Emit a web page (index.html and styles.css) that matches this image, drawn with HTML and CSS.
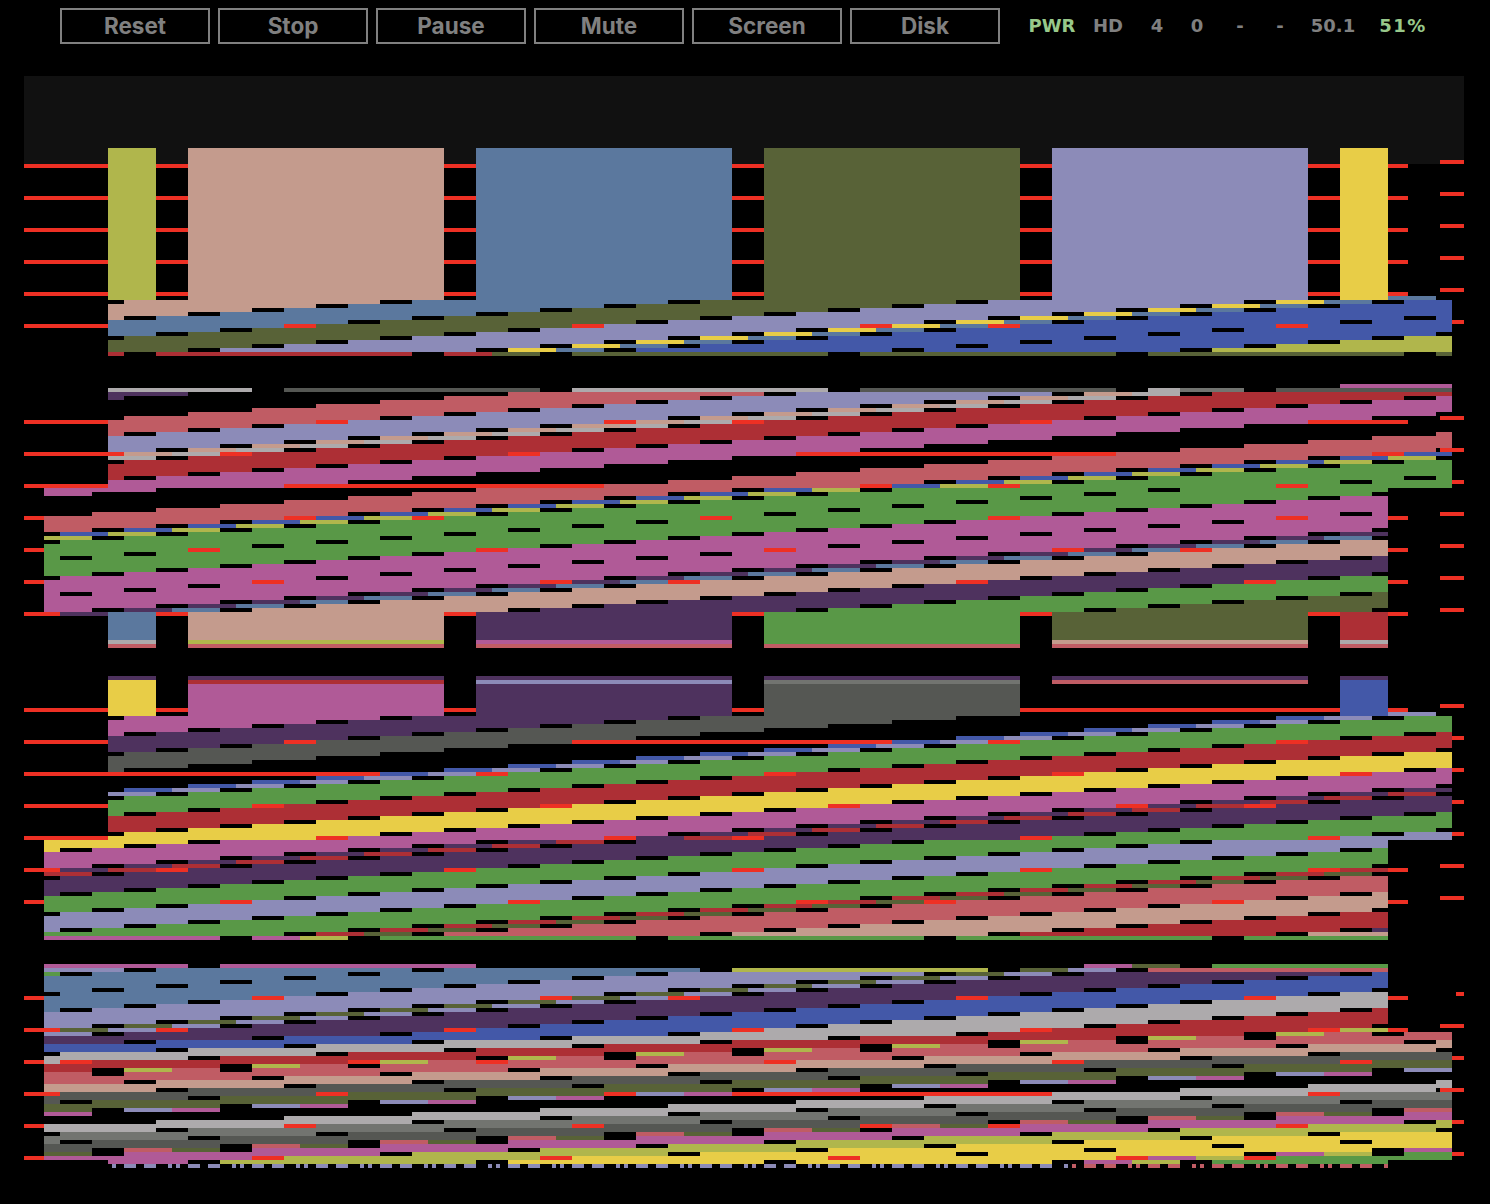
FILE: index.html
```html
<!DOCTYPE html>
<html lang="en">
<head>
<meta charset="utf-8">
<title>Emulator</title>
<link rel="stylesheet" href="styles.css">
</head>
<body>
<header class="toolbar">
  <nav class="buttons">
    <button class="btn">Reset</button>
    <button class="btn">Stop</button>
    <button class="btn">Pause</button>
    <button class="btn">Mute</button>
    <button class="btn">Screen</button>
    <button class="btn">Disk</button>
  </nav>
  <div class="status">
    <span class="stat on">PWR</span>
    <span class="stat">HD</span>
    <span class="stat">4</span>
    <span class="stat">0</span>
    <span class="stat">-</span>
    <span class="stat">-</span>
    <span class="stat">50.1</span>
    <span class="stat on pct">51%</span>
  </div>
</header>
<canvas class="screen" id="screen" width="1440" height="1128"></canvas>
<script src="app.js"></script>
</body>
</html>
```
FILE: styles.css
```css
html, body {
  margin: 0;
  padding: 0;
  background: #000;
  height: 1204px;
  overflow: hidden;
}
.toolbar {
  display: flex;
  align-items: flex-start;
  height: 68px;
  padding: 8px 0 0 60px;
}
.buttons {
  display: flex;
  gap: 8px;
}
.btn {
  width: 150px;
  height: 36px;
  box-sizing: border-box;
  border: 2px solid #808080;
  background: #000;
  color: #808080;
  font: 700 22.5px/32px Inter, "Liberation Sans", sans-serif;
  padding: 0;
  margin: 0;
}
.status {
  display: grid;
  grid-template-columns: 56px 56px 42px 38px 48px 32px 74px 66px;
  margin-left: 24px;
  height: 36px;
}
.stat {
  text-align: center;
  color: #808080;
  font: 700 18px/36px "DejaVu Sans", sans-serif;
}
.stat.on {
  color: #98c88a;
}
.stat.pct {
  letter-spacing: 1.5px;
}
.screen {
  display: block;
  margin-left: 24px;
  width: 1440px;
  height: 1128px;
  filter: blur(0.45px);
}
```
FILE: app.js
```js
(function () {
  var C = {
    yo: '#b0b64c', pink: '#c49b8d', steel: '#5b789e', olive: '#586237', lav: '#8c8bb8',
    yellow: '#e8cd47', bright: '#4358a8', red: '#ad2f35', mag: '#b05a97', rose: '#c05c64',
    green: '#599847', purple: '#4e325e', dg: '#555753', lg: '#adaaac', mg: '#727470'
  };
  var LINE = '#ee3024';
  var ROWS = [164, 196, 228, 260, 292, 324, 420, 452, 484, 516, 548, 580, 612, 708, 740, 772,
    804, 836, 868, 900, 996, 1028, 1060, 1092, 1124, 1156];
  var ctx = document.getElementById('screen').getContext('2d');
  ctx.translate(-24, -76);

  function bgAt(x, y) {
    if (x < 1408 && ROWS.indexOf(y) >= 0) return LINE;
    if (x >= 1440 && ROWS.indexOf(y + 4) >= 0 && !(y === 992 && x < 1456)) return LINE;
    return y < 164 ? '#111111' : '#000000';
  }
  function cell(x, y, c) { ctx.fillStyle = c; ctx.fillRect(x, y, 4, 4); }
  function rect(x0, x1, y0, y1, c) { ctx.fillStyle = c; ctx.fillRect(x0, y0, x1 - x0, y1 - y0); }

  ctx.fillStyle = '#000'; ctx.fillRect(24, 76, 1440, 1128);
  for (var bx = 24; bx < 1464; bx += 4) for (var by = 76; by < 1204; by += 4) {
    var col = bgAt(bx, by);
    if (col !== '#000000') cell(bx, by, col);
  }

  var ID = function (r) { return r; };
  var M2 = function (r) { return r < 488 ? r + 4 : r; };
  var M3 = function (r) { return r > 840 ? r - 4 : r; };
  var M4 = function (r) {
    if (r <= 1032) return r;
    if (r >= 1288) return 1164 + (r - 1288);
    return 1032 + Math.ceil((r - 1032) / 8) * 4;
  };

  function lvl(a, x) { return a.y - 4 * Math.floor((x - a.x) / 64); }

  // Each band: [x, y, colour, thinB?, noHole?] — the band runs from this line to the next one.
  function group(g) {
    var m = g.m || ID, L = g.lines, k, x, y;
    var mapOf = function (a) { return a[5] || m; };
    for (k = 0; k < L.length - 1; k++) {
      var a = { x: L[k][0], y: L[k][1] }, b = { x: L[k + 1][0], y: L[k + 1][1] };
      var ma = mapOf(L[k]), mb = mapOf(L[k + 1]);
      if (L[k][3]) {
        for (var i = -40; i < 60; i++) {
          var s = a.x + 64 * i, r = a.y - 4 * i;
          if (ma(r) === ma(r + 4)) continue;
          y = ma(r);
          for (x = s + 32; x < s + 80; x += 4) if (g.ok(x, y)) cell(x, y, C[L[k][2]]);
          for (x = s + 80; x < s + 128; x += 4) if (g.ok(x, y)) cell(x, y, C[L[k][3]]);
        }
      } else {
        for (x = g.x0; x < g.x1; x += 4) {
          var t = ma(lvl(a, x)), e = mb(lvl(b, x));
          for (y = t; y < e; y += 4) if (g.ok(x, y)) cell(x, y, C[L[k][2]]);
        }
      }
    }
    (g.over || []).forEach(function (o) { rect(o[0], o[1], o[2], o[2] + 4, C[o[3]]); });
    L.forEach(function (l) {
      if (l[4]) return;
      var mm = mapOf(l);
      for (var i = -40; i < 60; i++) {
        var s = l[0] + 64 * i, r = l[1] - 4 * i;
        if (mm(r) === mm(r + 4)) continue;
        var yy = mm(r);
        for (var xx = s; xx < s + 32; xx += 4) if (g.ok(xx, yy)) cell(xx, yy, bgAt(xx, yy));
      }
    });
  }

  var XS = [[108, 156], [188, 444], [476, 732], [764, 1020], [1052, 1308], [1340, 1388]];
  function cols(names, y0, y1) {
    names.forEach(function (n, i) { if (n) rect(XS[i][0], XS[i][1], y0, y1, C[n]); });
  }

  // Section 1
  cols(['yo', 'pink', 'steel', 'olive', 'lav', 'yellow'], 148, 300);
  group({
    x0: 108, x1: 1452,
    ok: function (x, y) { return x >= 108 && x < 1452 && y < 356 && (y >= 300 || (x >= 1388 && y >= 296)); },
    lines: [[92, 300, 'pink'], [124, 316, 'steel'], [156, 332, 'olive'], [188, 348, 'lav'],
      [220, 364, 'yellow', 'steel'], [220, 372, 'bright'], [252, 388, 'bright'], [284, 404, 'yo'], [316, 420, 'yo']],
    over: [[108, 492, 352, 'red'], [492, 1404, 352, 'olive'], [1436, 1452, 352, 'olive']]
  });

  // Section 2, upper
  [[108, 252, 'lg'], [284, 540, 'dg'], [572, 828, 'lg'], [860, 1116, 'dg'], [1148, 1180, 'lg'],
    [1180, 1244, 'mg'], [1276, 1452, 'dg']].forEach(function (o) { rect(o[0], o[1], 388, 392, C[o[2]]); });
  rect(1340, 1452, 384, 388, C.mag);
  rect(108, 188, 392, 396, C.purple);
  rect(108, 124, 396, 400, C.purple);
  group({
    x0: 44, x1: 1452,
    ok: function (x, y) { return x < 1452 && y >= 392 && (x >= 108 || (x >= 44 && y >= 488)); },
    lines: [[124, 416, 'rose', null, true], [124, 432, 'lav'], [156, 448, 'pink', 'lg'], [156, 456, 'red'],
      [188, 472, 'mag'], [92, 492, 'x', null, true, M2]]
  });

  // Section 2, lower
  group({
    x0: 44, x1: 1452, m: M2,
    ok: function (x, y) {
      if (x < 44 || x >= 1452) return false;
      if (x >= 1388 && y >= 488) return false;
      return y < 612 || (y < 616 && x < 108);
    },
    lines: [[92, 512, 'rose', null, true], [92, 528, 'bright', 'yo'], [92, 536, 'green'], [124, 552, 'green'],
      [156, 568, 'mag'], [188, 584, 'mag'], [220, 600, 'purple', 'steel'], [220, 608, 'pink'], [252, 624, 'purple'],
      [284, 640, 'green'], [316, 656, 'olive'], [348, 672, 'red'], [380, 688, 'red']]
  });
  cols(['steel', 'pink', 'purple', 'green', 'olive', 'red'], 612, 640);
  cols(['lg', 'yo', 'mag', 'green', 'pink', 'lg'], 640, 644);
  cols(['rose', 'rose', 'rose', 'rose', 'rose', 'rose'], 644, 648);

  // Section 3, upper
  cols(['yellow', 'mag', 'purple', 'dg', null, 'bright'], 680, 716);
  cols(['purple', 'purple', 'purple', 'purple', 'purple', 'purple'], 676, 680);
  cols([null, 'red', 'lav', 'mg', 'rose', null], 680, 684);
  group({
    x0: 108, x1: 1388,
    ok: function (x, y) { return x >= 108 && y >= 716; },
    lines: [[92, 716, 'mag'], [124, 732, 'purple'], [156, 748, 'dg'], [188, 764, 'x', null, true]]
  });

  // Section 3, lower
  group({
    x0: 44, x1: 1452, m: M3,
    ok: function (x, y) {
      if (x >= 1452 || y >= 940 || x < 44) return false;
      if (y < 840) return x >= 108 && (y >= 716 || (x >= 1388 && y >= 712));
      return x < 1388;
    },
    lines: [[92, 788, 'bright', 'lav'], [92, 796, 'green'], [124, 812, 'red'], [156, 828, 'yellow'],
      [188, 844, 'mag'], [220, 860, 'purple', 'red'], [220, 868, 'purple'], [252, 884, 'green'],
      [284, 900, 'lav'], [316, 916, 'green'], [348, 932, 'red', 'olive'], [348, 940, 'rose'],
      [380, 956, 'pink'], [412, 972, 'red'], [444, 988, 'purple'], [476, 1004, 'purple']],
    over: [[44, 252, 936, 'mag'], [252, 300, 936, 'mag'], [300, 380, 936, 'yo'], [380, 1388, 936, 'green'], [1308, 1388, 932, 'pink']]
  });

  // Section 4, upper
  [[44, 188, 'mag'], [220, 476, 'mag'], [1084, 1132, 'mag'], [1132, 1180, 'olive'], [1212, 1388, 'green']]
    .forEach(function (o) { rect(o[0], o[1], 964, 968, C[o[2]]); });
  group({
    x0: 44, x1: 1452, m: M4,
    ok: function (x, y) {
      if (x < 44 || x >= 1452 || y < 968) return false;
      return x < 1388 || y >= 1032;
    },
    lines: [[124, 968, 'steel'], [156, 984, 'steel'], [188, 1000, 'lav'], [220, 1016, 'olive', 'lav'],
      [220, 1024, 'purple'], [252, 1040, 'bright'], [284, 1056, 'lg'], [316, 1072, 'red'],
      [348, 1088, 'yo', 'rose'], [348, 1096, 'rose'], [380, 1112, 'pink'], [412, 1128, 'dg'],
      [444, 1144, 'olive'], [476, 1160, 'lav', 'mag'], [476, 1168, 'x']],
    over: [[44, 124, 968, 'lav'], [44, 60, 972, 'green'], [732, 988, 968, 'yo'], [1148, 1388, 968, 'rose']]
  });

  // Section 4, lower
  group({
    x0: 44, x1: 1452, m: M4,
    ok: function (x, y) {
      if (x < 44 || x >= 1452) return false;
      return y < 1160 || (y < 1164 && x >= 108 && x < 1388);
    },
    lines: [[156, 1208, 'lg', null, true], [156, 1224, 'mg'], [188, 1240, 'dg'], [220, 1256, 'rose', 'olive'],
      [220, 1264, 'mag'], [252, 1280, 'yo'], [284, 1296, 'yellow'], [316, 1312, 'yellow'],
      [348, 1328, 'mag', 'yo'], [348, 1336, 'green'], [380, 1352, 'green'], [412, 1368, 'green'], [444, 1384, 'green'],
      [476, 1400, 'green'], [508, 1416, 'x']]
  });

  // Dotted last line
  for (var d = 60; d < 1388; d += 64) {
    [[0, 12], [20, 32], [44, 48], [52, 56]].forEach(function (p) {
      var a = Math.max(d + p[0], 108), b = Math.min(d + p[1], 1388);
      if (a < b) rect(a, b, 1164, 1168, a < 1072 ? C.lav : C.rose);
    });
  }
})();
```
